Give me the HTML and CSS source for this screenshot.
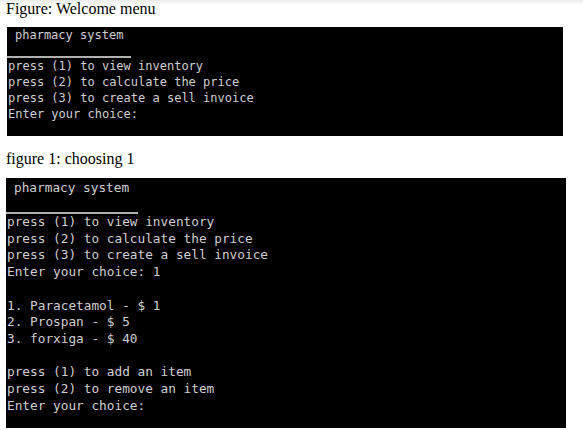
FILE: index.html
```html
<!DOCTYPE html>
<html>
<head>
<meta charset="utf-8">
<link rel="stylesheet" href="styles.css">
</head>
<body>
<div class="page">
  <p class="caption cap-a">Figure: Welcome menu</p>
  <div class="term term-a">
    <div class="title">pharmacy system</div>
    <div class="rule"></div>
    <pre class="out">press (1) to view inventory
press (2) to calculate the price
press (3) to create a sell invoice
Enter your choice:</pre>
  </div>
  <p class="caption cap-b">figure 1: choosing 1</p>
  <div class="term term-b">
    <div class="title">pharmacy system</div>
    <div class="rule"></div>
    <pre class="out">press (1) to view inventory
press (2) to calculate the price
press (3) to create a sell invoice
Enter your choice: 1

1. Paracetamol - $ 1
2. Prospan - $ 5
3. forxiga - $ 40

press (1) to add an item
press (2) to remove an item
Enter your choice:</pre>
  </div>
</div>
</body>
</html>
```
FILE: styles.css
```css
html, body {
  margin: 0;
  padding: 0;
  background: #ffffff;
}
.page {
  display: flex;
  flex-direction: column;
  align-items: flex-start;
  height: 430px;
  overflow: hidden;
  background: linear-gradient(#ececec 0, #ffffff 5px, #ffffff 100%);
}
.caption {
  margin: 0;
  padding-left: 6px;
  font-family: "Liberation Serif", "Times New Roman", serif;
  font-size: 16px;
  line-height: 18px;
  color: #000;
}
.cap-a {
  height: 27px;
  padding-top: 0;
}
.cap-b {
  height: 28px;
  padding-top: 14px;
  line-height: 17px;
}
.term {
  background: #000;
  color: #cfcfcf;
  font-family: "DejaVu Sans Mono", "Liberation Mono", monospace;
  box-sizing: border-box;
}
.term-a {
  margin-left: 7px;
  width: 556px;
  height: 109px;
  font-size: 12px;
  line-height: 16px;
}
.term-b {
  margin-left: 6px;
  width: 560px;
  height: 250px;
  font-size: 12.75px;
  line-height: 16.7px;
}
.title {
  padding-left: 8px;
  white-space: pre;
}
.term-a .title {
  height: 16px;
}
.term-b .title {
  margin-top: 2px;
  height: 17px;
}
.rule {
  height: 2px;
  background: #b0b0b0;
}
.term-a .rule {
  width: 124px;
  margin-top: 13px;
}
.term-b .rule {
  width: 132px;
  margin-top: 15px;
}
.out {
  margin: 0;
  padding-left: 1px;
  font: inherit;
  white-space: pre;
}
```
